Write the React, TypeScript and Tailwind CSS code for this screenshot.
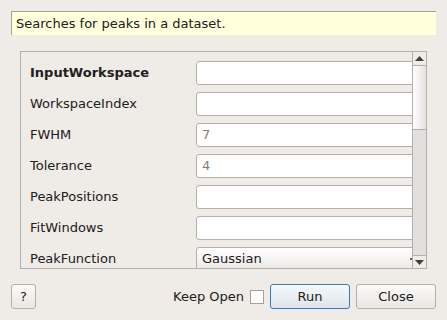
import React from "react";

const rows = [
  { label: "InputWorkspace", bold: true, value: "" },
  { label: "WorkspaceIndex", value: "" },
  { label: "FWHM", value: "7" },
  { label: "Tolerance", value: "4" },
  { label: "PeakPositions", value: "" },
  { label: "FitWindows", value: "" },
];

export default function App() {
  return (
    <div
      className="w-[447px] h-[320px] bg-[#efebe7] text-[#202020] overflow-hidden relative"
      style={{ fontFamily: '"DejaVu Sans", "Liberation Sans", sans-serif' }}
    >
      {/* description */}
      <div className="absolute left-[11px] top-[11px] w-[425px] h-[24px] bg-[#ffffdc] border-l border-t border-[#a5a29d] pl-[4px] text-[13px] leading-[23px]">
        Searches for peaks in a dataset.
      </div>

      {/* scroll area */}
      <div className="absolute left-[20px] top-[51px] w-[407px] h-[218px] border border-[#b3b0ab] flex">
        <div className="w-[391px] h-full overflow-hidden">
          <div className="pt-[9px] pl-[9px] flex flex-col gap-[7px] w-[460px]">
            {rows.map((r) => (
              <div key={r.label} className="flex items-center h-[24px]">
                <div className={`w-[166px] text-[13px] ${r.bold ? "font-bold" : ""}`}>{r.label}</div>
                <div className="w-[240px] h-[24px] bg-white border border-[#b3b0ab] rounded-[3px] pl-[5px] text-[13px] leading-[22px] text-[#808080]">
                  {r.value}
                </div>
              </div>
            ))}
            <div className="flex items-center h-[24px]">
              <div className="w-[166px] text-[13px]">PeakFunction</div>
              <div className="w-[240px] h-[24px] bg-gradient-to-b from-white to-[#ebe9e6] border border-[#b3b0ab] rounded-[3px] pl-[5px] text-[13px] leading-[22px] text-[#202020] relative">
                Gaussian
                <span className="absolute left-[213px] top-[10px] w-[2px] h-[2px] bg-[#606060]" />
              </div>
            </div>
          </div>
        </div>
        {/* scrollbar */}
        <div className="w-[14px] h-full border-l border-[#b3b0ab] bg-[#e2e0dd] flex flex-col">
          <div className="h-[14px] bg-[#efebe7] border-b border-[#b3b0ab] flex items-center justify-center">
            <svg width="9" height="5" viewBox="0 0 9 5">
              <polygon points="0,5 9,5 4.5,0" fill="#404040" />
            </svg>
          </div>
          <div className="h-[64px] bg-gradient-to-r from-white to-[#e4e2df] border-b border-[#b3b0ab]" />
          <div className="flex-1" />
          <div className="h-[13px] bg-[#efebe7] border-t border-[#b3b0ab] flex items-center justify-center">
            <svg width="9" height="5" viewBox="0 0 9 5">
              <polygon points="0,0 9,0 4.5,5" fill="#404040" />
            </svg>
          </div>
        </div>
      </div>

      {/* bottom buttons */}
      <div className="absolute left-[11px] top-[284px] w-[425px] h-[25px] flex items-center">
        <div className="w-[25px] h-[25px] rounded-[3px] border border-[#b3b0ab] bg-gradient-to-b from-[#fbfaf9] to-[#e9e7e4] flex items-center justify-center text-[13px]">
          ?
        </div>
        <div className="flex-1" />
        <div className="text-[13px] mr-[6px]">Keep Open</div>
        <div className="w-[14px] h-[14px] bg-white border border-[#a5a29d] mr-[6px]" />
        <div className="w-[80px] h-[25px] rounded-[3px] border border-[#3b7bb4] bg-gradient-to-b from-[#f6f8fa] to-[#dde5ec] flex items-center justify-center text-[13px] mr-[6px]">
          Run
        </div>
        <div className="w-[80px] h-[25px] rounded-[3px] border border-[#b3b0ab] bg-gradient-to-b from-[#fbfaf9] to-[#e9e7e4] flex items-center justify-center text-[13px]">
          Close
        </div>
      </div>
    </div>
  );
}
